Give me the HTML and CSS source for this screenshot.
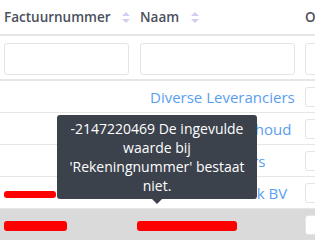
FILE: index.html
```html
<!DOCTYPE html>
<html lang="nl">
<head>
    <meta charset="UTF-8">
    <meta name="viewport" content="width=device-width, initial-scale=1.0">
    <title>Facturen</title>
    <link rel="stylesheet" href="styles.css">
</head>
<body>
    <div class="grid-wrap">
        <table class="grid">
            <thead>
                <tr class="head-row">
                    <th class="col-nr">Factuurnummer <span class="sort"></span></th>
                    <th class="col-name">Naam <span class="sort"></span></th>
                    <th class="col-desc">Omschrijving</th>
                </tr>
                <tr class="filter-row">
                    <td><input class="filter" type="text"></td>
                    <td><input class="filter" type="text"></td>
                    <td><input class="filter" type="text"></td>
                </tr>
            </thead>
            <tbody>
                <tr>
                    <td></td>
                    <td><a class="link" href="#">Diverse Leveranciers</a></td>
                    <td><input class="cell-input" type="text"></td>
                </tr>
                <tr>
                    <td></td>
                    <td><a class="link" href="#">Kantoor Onderhoud</a></td>
                    <td><input class="cell-input" type="text"></td>
                </tr>
                <tr>
                    <td></td>
                    <td><a class="link" href="#">Diverse Auditors</a></td>
                    <td><input class="cell-input" type="text"></td>
                </tr>
                <tr>
                    <td><span class="redact redact-a"></span></td>
                    <td><a class="link" href="#">Bakker Techniek BV</a></td>
                    <td><input class="cell-input" type="text"></td>
                </tr>
                <tr class="selected">
                    <td><span class="redact redact-b"></span></td>
                    <td><span class="redact redact-c"></span></td>
                    <td><input class="cell-input" type="text"></td>
                </tr>
            </tbody>
        </table>

        <div class="tooltip">
            -2147220469 De ingevulde waarde bij 'Rekeningnummer' bestaat niet.
        </div>
    </div>
</body>
</html>
```

FILE: styles.css
```css
body {
    margin: 0;
    font-family: "Open Sans", "Liberation Sans", sans-serif;
    background: #fff;
    overflow: hidden;
}
.grid-wrap {
    position: relative;
    width: 315px;
    height: 246px;
    overflow: hidden;
}
.grid {
    border-collapse: collapse;
    width: 420px;
    table-layout: fixed;
}
.grid th,
.grid td {
    padding: 0 4px;
    text-align: left;
    white-space: nowrap;
    overflow: hidden;
}
.col-nr { width: 128px; }
.col-name { width: 157px; }
.head-row th {
    height: 34px;
    font-size: 13.5px;
    font-weight: 600;
    color: #4a505c;
    border-bottom: 2px solid #e6e6e6;
}
.sort {
    display: inline-block;
    position: relative;
    width: 8px;
    height: 11px;
    margin-left: 8px;
    vertical-align: -1px;
}
.sort::before,
.sort::after {
    content: "";
    position: absolute;
    left: 0;
    border-left: 4px solid transparent;
    border-right: 4px solid transparent;
}
.sort::before {
    top: 0;
    border-bottom: 4px solid #cfcfee;
}
.sort::after {
    bottom: 0;
    border-top: 4px solid #cfcfee;
}
.filter-row td {
    height: 43px;
    border-bottom: 2px solid #e6e6e6;
}
.filter {
    box-sizing: border-box;
    width: 125px;
    height: 32px;
    border: 1px solid #e4e4e4;
    border-radius: 3px;
    margin-top: 3px;
}
.filter-row td:nth-child(2) .filter { width: 155px; }
tbody td {
    height: 31px;
    border-bottom: 1px solid #e6e6e6;
    font-size: 15px;
}
tbody tr.selected td {
    background: #dadada;
    border-bottom: none;
}
.link {
    color: #5a9ef0;
    text-decoration: none;
    margin-left: 10px;
}
.cell-input {
    box-sizing: border-box;
    width: 100px;
    height: 20px;
    border: 1px solid #e4e4e4;
    border-radius: 3px;
    background: #fff;
    vertical-align: middle;
}
.redact {
    display: inline-block;
    height: 7px;
    background: #ff0000;
    border-radius: 3px;
    vertical-align: middle;
}
.redact-a { width: 52px; }
.redact-b { width: 63px; height: 10px; }
.redact-c { width: 100px; height: 10px; margin-left: -3px; }
.tooltip {
    position: absolute;
    left: 57px;
    top: 115px;
    box-sizing: border-box;
    width: 200px;
    padding: 4px 10px;
    background: #3b424c;
    color: #fff;
    font-size: 14px;
    line-height: 19px;
    text-align: center;
    border-radius: 3px;
}
.tooltip::after {
    content: "";
    position: absolute;
    left: 95px;
    bottom: -5px;
    border-left: 5px solid transparent;
    border-right: 5px solid transparent;
    border-top: 5px solid #3b424c;
}
```
